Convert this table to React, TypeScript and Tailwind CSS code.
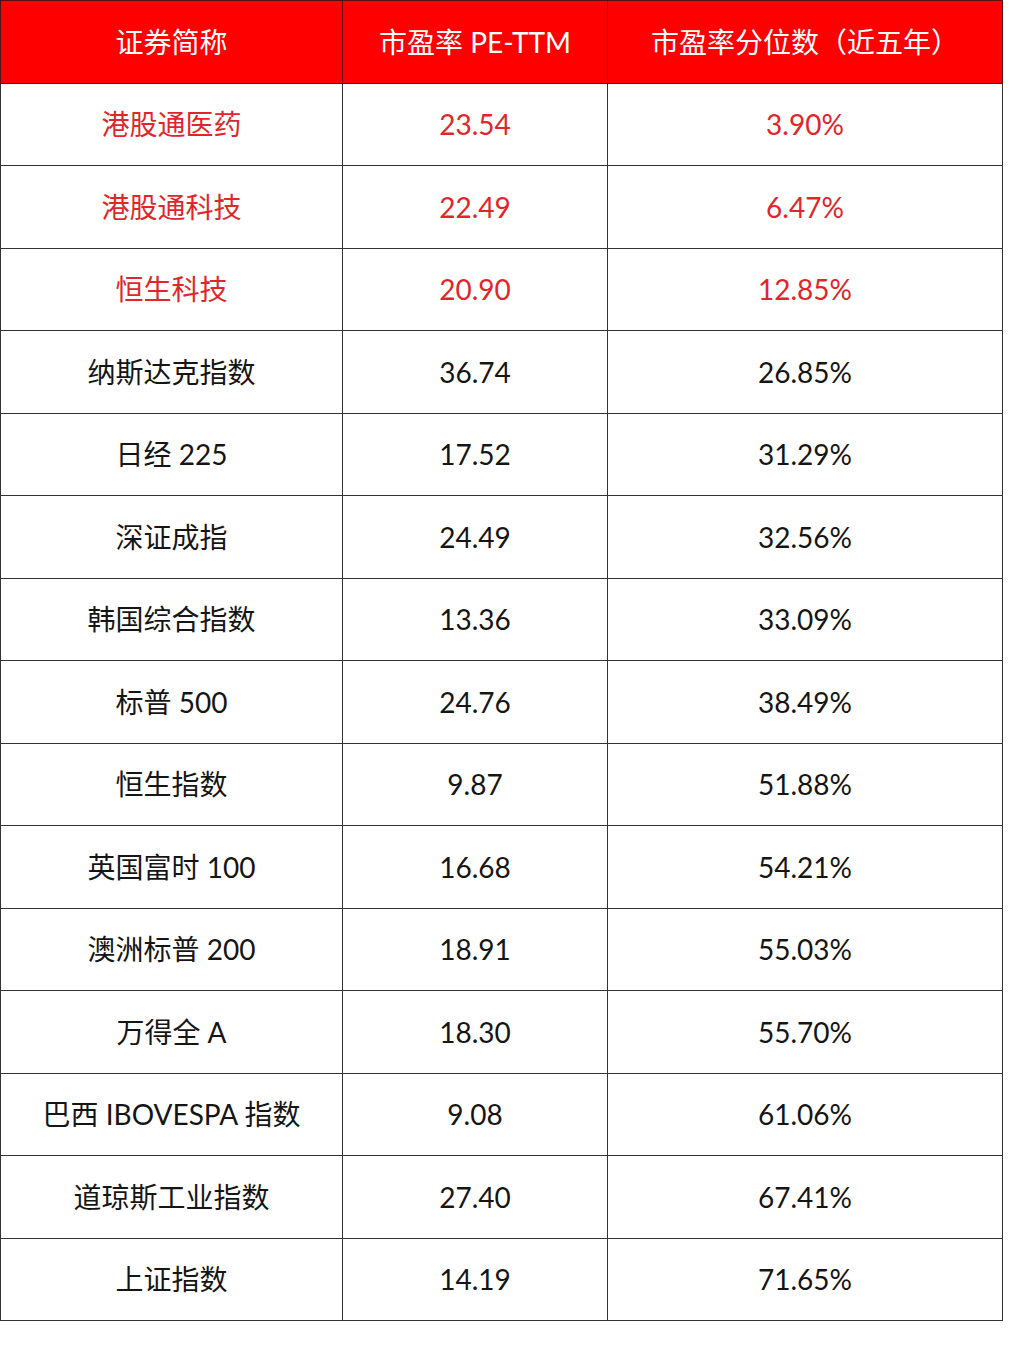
const rows: { name: string; pe: string; pct: string; hot?: boolean }[] = [
  { name: '港股通医药', pe: '23.54', pct: '3.90%', hot: true },
  { name: '港股通科技', pe: '22.49', pct: '6.47%', hot: true },
  { name: '恒生科技', pe: '20.90', pct: '12.85%', hot: true },
  { name: '纳斯达克指数', pe: '36.74', pct: '26.85%' },
  { name: '日经 225', pe: '17.52', pct: '31.29%' },
  { name: '深证成指', pe: '24.49', pct: '32.56%' },
  { name: '韩国综合指数', pe: '13.36', pct: '33.09%' },
  { name: '标普 500', pe: '24.76', pct: '38.49%' },
  { name: '恒生指数', pe: '9.87', pct: '51.88%' },
  { name: '英国富时 100', pe: '16.68', pct: '54.21%' },
  { name: '澳洲标普 200', pe: '18.91', pct: '55.03%' },
  { name: '万得全 A', pe: '18.30', pct: '55.70%' },
  { name: '巴西 IBOVESPA 指数', pe: '9.08', pct: '61.06%' },
  { name: '道琼斯工业指数', pe: '27.40', pct: '67.41%' },
  { name: '上证指数', pe: '14.19', pct: '71.65%' },
];

export default function App() {
  return (
    <div
      className="min-h-[1361px] w-[1024px] bg-white"
      style={{ fontFamily: 'Lato, "Noto Sans CJK SC", sans-serif' }}
    >
      <table className="w-[1002px] table-fixed border-collapse text-center text-[28px]">
        <colgroup>
          <col className="w-[342px]" />
          <col className="w-[265px]" />
          <col className="w-[395px]" />
        </colgroup>
        <thead>
          <tr className="h-[82.5px] bg-[#fe0000] text-white">
            <th className="border-[1.5px] border-[#5a1010] font-normal">证券简称</th>
            <th className="border-[1.5px] border-[#5a1010] font-normal">市盈率 PE-TTM</th>
            <th className="border-[1.5px] border-[#5a1010] font-normal">市盈率分位数（近五年）</th>
          </tr>
        </thead>
        <tbody>
          {rows.map((r) => (
            <tr
              key={r.name}
              className={r.hot ? 'h-[82.5px] text-[#e0262b]' : 'h-[82.5px] text-[#151515]'}
            >
              <td className="border-[1.5px] border-[#333]">{r.name}</td>
              <td className="border-[1.5px] border-[#333]">{r.pe}</td>
              <td className="border-[1.5px] border-[#333]">{r.pct}</td>
            </tr>
          ))}
        </tbody>
      </table>
    </div>
  );
}
